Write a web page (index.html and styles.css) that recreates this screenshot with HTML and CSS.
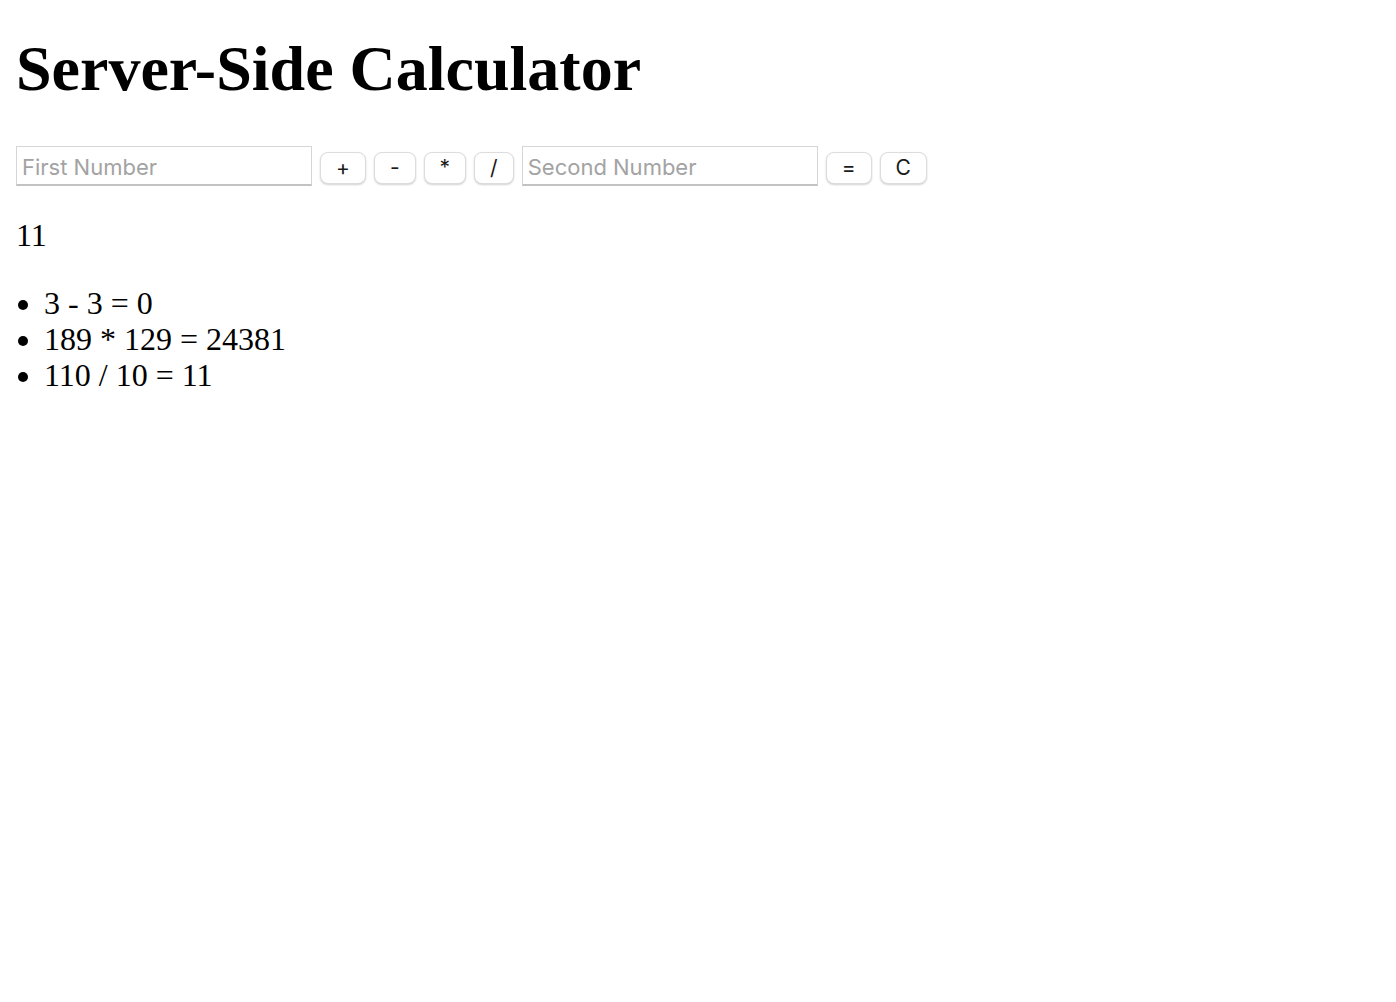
FILE: index.html
```html
<!DOCTYPE html>
<html>
<head>
<meta charset="utf-8">
<title>Server-Side Calculator</title>
<link rel="stylesheet" href="styles.css">
</head>
<body>
<h1 class="title">Server-Side Calculator</h1>
<div class="controls"><input class="num" type="text" placeholder="First Number"> <button class="btn">+</button> <button class="btn">-</button> <button class="btn">*</button> <button class="btn">/</button> <input class="num" type="text" placeholder="Second Number"> <button class="btn">=</button> <button class="btn">C</button></div>
<p class="result">11</p>
<ul class="history">
<li>3 - 3 = 0</li>
<li>189 * 129 = 24381</li>
<li>110 / 10 = 11</li>
</ul>
</body>
</html>
```
FILE: styles.css
```css
html, body {
  margin: 0;
  padding: 0;
  background: #fff;
}
body {
  padding: 16px;
  font-family: "Liberation Serif", "Times New Roman", serif;
  font-size: 32px;
  color: #000;
}
.title {
  font-size: 64px;
  font-weight: bold;
  margin: 16px 0 40px 0;
  line-height: 74px;
}
.controls {
  font-size: 32px;
  line-height: 40px;
  white-space: nowrap;
}
.num {
  box-sizing: border-box;
  width: 296px;
  height: 40px;
  vertical-align: top;
  border: 1px solid #d6d6d6;
  border-bottom: 2px solid #c2c2c2;
  padding: 3px 5px 0 5px;
  font-family: Inter, "Liberation Sans", Arial, sans-serif;
  font-size: 22px;
  color: #000;
  background: #fff;
  outline: none;
}
.num::placeholder {
  color: #a3a3a3;
}
.btn {
  box-sizing: border-box;
  height: 32px;
  margin-top: 6px;
  vertical-align: top;
  padding: 0 15px;
  border: 1px solid #dcdcdc;
  border-radius: 8px;
  background: #fff;
  box-shadow: 0 1px 2px rgba(0,0,0,0.18);
  font-family: Inter, "Liberation Sans", Arial, sans-serif;
  font-size: 21px;
  line-height: 30px;
  color: #1a1a1a;
}
.result {
  margin: 29px 0 0 0;
  line-height: 40px;
}
.history {
  margin: 30px 0 0 0;
  padding-left: 28px;
  line-height: 36px;
}
```
